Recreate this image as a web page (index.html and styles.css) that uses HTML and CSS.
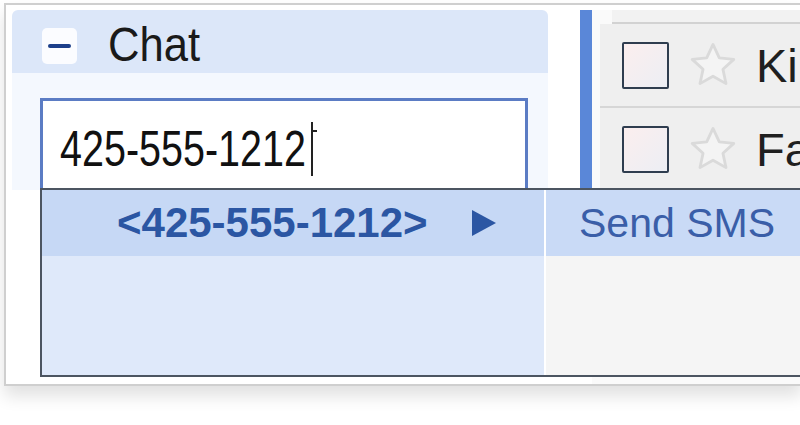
FILE: index.html
```html
<!DOCTYPE html>
<html lang="en">
<head>
    <meta charset="UTF-8">
    <title>Chat - Send SMS</title>
    <link rel="stylesheet" href="styles.css">
</head>
<body>

    <div class="frame">
        <div class="chat">
            <div class="chat-head">
                <span class="toggle"><span class="minus"></span></span>
                <span class="chat-title">Chat</span>
            </div>
            <div class="chat-search">
                <div class="search-box"><span class="search-text">425-555-1212</span><span class="caret"></span></div>
            </div>
        </div>

        <div class="gap"></div>
        <div class="bar"></div>

        <div class="mail">
            <div class="mail-top"></div>
            <div class="mail-row">
                <span class="check"></span>
                <svg class="star" width="52" height="52" viewBox="0 0 24 24"><path d="M12 2.5l2.9 6.2 6.7.7-5 4.6 1.4 6.6L12 17.2l-6 3.4 1.4-6.6-5-4.6 6.7-.7z" fill="#f4f4f4" stroke="#dadada" stroke-width="1.3" stroke-linejoin="round"/></svg>
                <span class="sender">Ki</span>
            </div>
            <div class="mail-row">
                <span class="check"></span>
                <svg class="star" width="52" height="52" viewBox="0 0 24 24"><path d="M12 2.5l2.9 6.2 6.7.7-5 4.6 1.4 6.6L12 17.2l-6 3.4 1.4-6.6-5-4.6 6.7-.7z" fill="#f4f4f4" stroke="#dadada" stroke-width="1.3" stroke-linejoin="round"/></svg>
                <span class="sender">Fa</span>
            </div>
        </div>

        <div class="suggest">
            <div class="suggest-left">
                <div class="suggest-hl">
                    <span class="number">&lt;425-555-1212&gt;</span>
                    <span class="arrow"></span>
                </div>
            </div>
            <div class="suggest-right">
                <div class="suggest-hl action">Send SMS</div>
            </div>
        </div>
    </div>

</body>
</html>
```

FILE: styles.css
```css
body {
    margin: 0;
    background: #fff;
    font-family: "Liberation Sans", Arial, sans-serif;
    overflow: hidden;
    width: 800px;
    height: 425px;
}
.frame {
    position: relative;
    margin: 3px 0 0 4px;
    width: 790px;
    height: 374px;
    padding: 5px 0 0 6px;
    border: 2px solid #cfcfcf;
    border-right: none;
    background: #fff;
    display: flex;
    overflow: hidden;
    box-shadow: 0 10px 16px rgba(0, 0, 0, 0.12);
}
.chat {
    width: 536px;
    flex-shrink: 0;
    display: flex;
    flex-direction: column;
}
.chat-head {
    height: 63px;
    background: #dce7f9;
    border-radius: 6px 6px 0 0;
    display: flex;
    align-items: center;
}
.toggle {
    width: 35px;
    height: 36px;
    margin-left: 30px;
    background: #fbfcff;
    border-radius: 5px;
    display: flex;
    align-items: center;
    justify-content: center;
    margin-top: 8px;
}
.minus {
    width: 23px;
    height: 4px;
    background: #1c3f8a;
    border-radius: 2px;
}
.chat-title {
    font-size: 49px;
    color: #1a1a1a;
    margin-left: 31px;
    margin-top: 4px;
    transform: scaleX(0.89);
    transform-origin: left center;
}
.chat-search {
    background: #f4f8fe;
    padding: 25px 20px 0 28px;
    height: 92px;
}
.search-box {
    height: 89px;
    border: 3px solid #5b7cc4;
    border-bottom: none;
    background: #fff;
    padding-left: 17px;
    display: flex;
    align-items: center;
}
.search-text {
    font-size: 50px;
    color: #111;
    width: 249px;
    white-space: nowrap;
    transform: scaleX(0.79);
    transform-origin: left center;
    margin-top: 6px;
}
.caret {
    width: 2px;
    height: 54px;
    background: #222;
    margin-left: 2px;
    margin-top: 6px;
    position: relative;
}
.caret::after {
    content: "";
    position: absolute;
    left: 2px;
    top: 8px;
    width: 4px;
    height: 2px;
    background: #222;
}
.gap {
    width: 32px;
    flex-shrink: 0;
}
.bar {
    width: 12px;
    flex-shrink: 0;
    height: 178px;
    background: #5a87d8;
}
.mail {
    flex: 1;
    background: #fafafa;
    padding-left: 8px;
}
.mail-top {
    height: 12px;
    border-bottom: 2px solid #d2d2d2;
    margin-left: 12px;
    background: #f2f2f2;
}
.mail-row {
    height: 82px;
    background: #efefef;
    border-bottom: 2px solid #d6d6d6;
    display: flex;
    align-items: center;
}
.check {
    width: 43px;
    height: 43px;
    flex-shrink: 0;
    border: 2px solid #2f3d4f;
    border-radius: 2px;
    background: linear-gradient(135deg, #fbeeee, #eceef4);
    margin-left: 22px;
}
.star {
    flex-shrink: 0;
    margin-left: 18px;
}
.sender {
    font-size: 47px;
    color: #1f1f1f;
    margin-left: 17px;
    white-space: nowrap;
}
.suggest {
    position: absolute;
    left: 34px;
    top: 183px;
    width: 800px;
    height: 185px;
    border: 2px solid #4c5561;
    border-right: none;
    display: flex;
}
.suggest-left {
    width: 502px;
    background: #dfe9fa;
    border-right: 2px solid #fff;
}
.suggest-right {
    flex: 1;
    background: #f5f5f5;
}
.suggest-hl {
    height: 66px;
    background: #c6d8f5;
    display: flex;
    align-items: center;
}
.number {
    font-size: 42px;
    font-weight: bold;
    color: #2b56a3;
    margin-left: 75px;
}
.arrow {
    width: 0;
    height: 0;
    border-top: 13px solid transparent;
    border-bottom: 13px solid transparent;
    border-left: 24px solid #2b56a3;
    margin-left: 44px;
}
.action {
    font-size: 41px;
    color: #3a5ea8;
    padding-left: 33px;
    background: #c9daf6;
}
```
